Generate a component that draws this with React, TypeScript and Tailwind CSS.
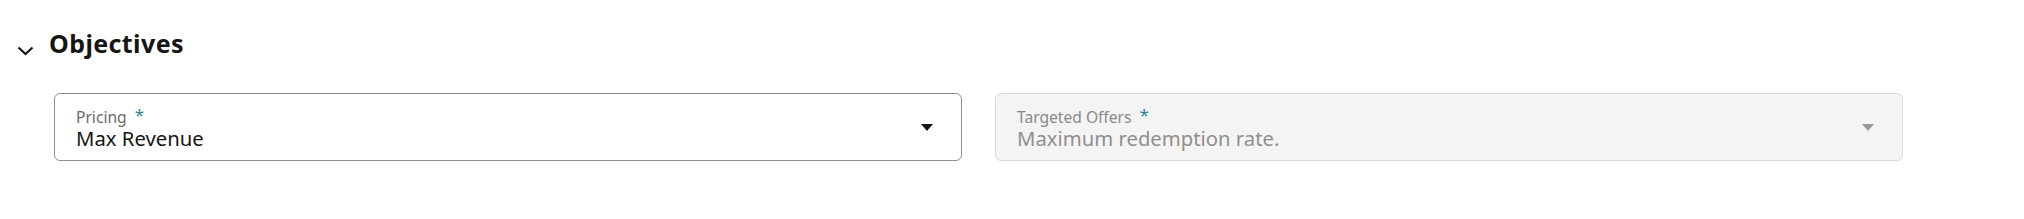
import React from "react";

function Caret({ color }: { color: string }) {
  return (
    <svg width="12" height="7" viewBox="0 0 12 7" className="shrink-0">
      <path d="M0 0 L12 0 L6 7 Z" fill={color} />
    </svg>
  );
}

function Field({
  label,
  value,
  disabled,
}: {
  label: string;
  value: string;
  disabled?: boolean;
}) {
  return (
    <div
      className={
        "flex h-[68px] w-[908px] shrink-0 items-center rounded-[6px] border pl-[21px] pr-[28px] " +
        (disabled ? "border-[#d9d9d9] bg-[#f4f4f4]" : "border-[#8f8f8f] bg-white")
      }
    >
      <div className="flex min-w-0 flex-1 flex-col pt-[4px]">
        <div
          className={
            "flex items-start text-[15.6px] leading-[18px] " +
            (disabled ? "text-[#8a8a8a]" : "text-[#6b6b6b]")
          }
        >
          <span>{label}</span>
          <span className="ml-[8px] text-[17px] leading-[14px] text-[#2b7fa0]">*</span>
        </div>
        <div
          className={
            "text-[20.3px] leading-[24px] " + (disabled ? "text-[#8f8f8f]" : "text-[#161513]")
          }
        >
          {value}
        </div>
      </div>
      <Caret color={disabled ? "#9a9a9a" : "#161513"} />
    </div>
  );
}

export default function App() {
  return (
    <div
      className="h-[219px] w-[2024px] bg-white"
      style={{ fontFamily: '"Noto Sans", "Open Sans", sans-serif' }}
    >
      <div className="flex items-center pl-[17px] pt-[28px]">
        <svg width="17" height="10" viewBox="0 0 17 10" className="mt-[15px]">
          <path d="M1.5 1.5 L8.5 8 L15.5 1.5" fill="none" stroke="#161513" strokeWidth="2.2" />
        </svg>
        <h2 className="ml-[15px] text-[25px] font-bold leading-[30px] tracking-[0.4px] text-[#161513]">
          Objectives
        </h2>
      </div>
      <div className="mt-[35px] flex gap-[33px] pl-[54px]">
        <Field label="Pricing" value="Max Revenue" />
        <Field label="Targeted Offers" value="Maximum redemption rate." disabled />
      </div>
    </div>
  );
}
